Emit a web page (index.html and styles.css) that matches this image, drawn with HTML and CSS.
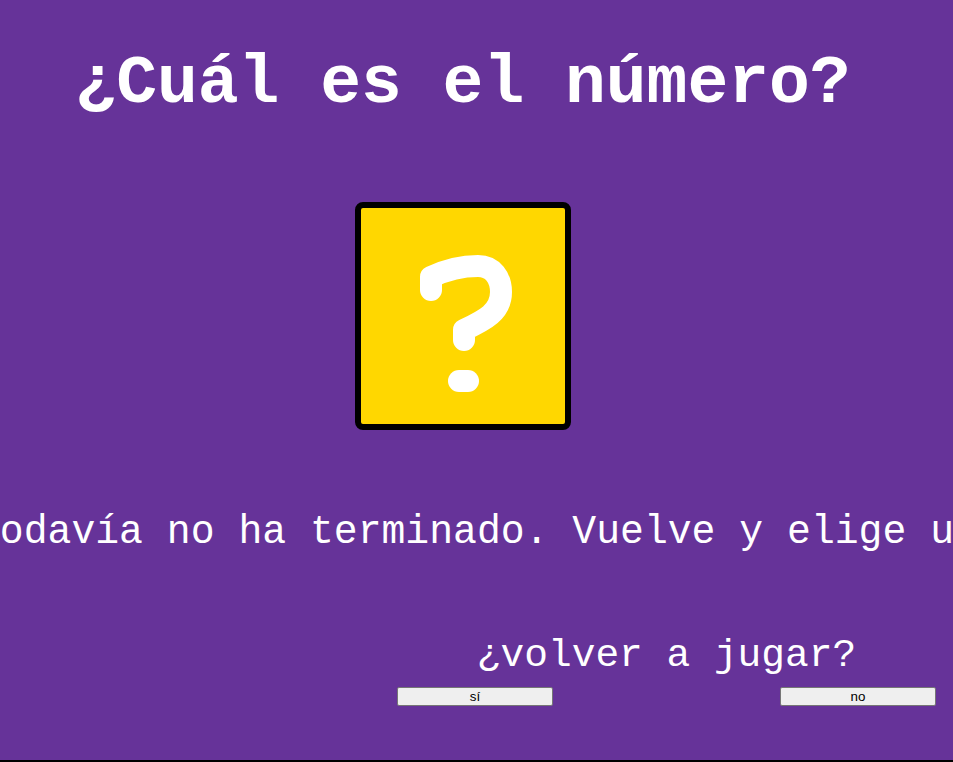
FILE: index.html
```html
<!DOCTYPE html>
<html lang="es">
<head>
<meta charset="utf-8">
<title>¿Cuál es el número?</title>
<link rel="stylesheet" href="styles.css">
</head>
<body>
<main class="page">
  <h1 class="title">¿Cuál es el número?</h1>
  <div class="card-wrap">
    <div class="card">
      <svg class="mark" width="204" height="216" viewBox="0 0 204 216" aria-label="?">
        <path d="M70 82 L70 69 C89 60 107 58 117 58 C132 58 140 70 140 84 C140 104 124 112 103 122 L103 132" fill="none" stroke="#fff" stroke-width="22" stroke-linecap="round" stroke-linejoin="round"/>
        <rect x="87" y="162" width="31" height="22" rx="11" fill="#fff"/>
      </svg>
    </div>
  </div>
  <div class="ticker"><p class="ticker-text">Todavía no ha terminado. Vuelve y elige un número.</p></div>
  <section class="again">
    <p class="again-label">¿volver a jugar?</p>
    <div class="again-buttons">
      <button class="btn" type="button">sí</button>
      <button class="btn" type="button">no</button>
    </div>
  </section>
</main>
</body>
</html>
```
FILE: styles.css
```css
html {
  background: #000;
  height: 100%;
}
body {
  margin: 0;
  height: 760px;
  background: #663399;
  color: #fff;
  font-family: "Courier New", "Nimbus Mono PS", "FreeMono", "Liberation Mono", monospace;
  overflow: hidden;
}
.page {
  width: 926px;
}
.title {
  margin: 45px 0 0;
  font-size: 68px;
  font-weight: bold;
  line-height: 77px;
  text-align: center;
}
.card-wrap {
  display: flex;
  justify-content: center;
  margin-top: 80px;
}
.card {
  box-sizing: border-box;
  width: 216px;
  height: 228px;
  border: 6px solid #000;
  border-radius: 8px;
  background: #ffd700;
  display: flex;
}
.mark {
  display: block;
}
.ticker {
  width: 953px;
  overflow: hidden;
  margin-top: 80px;
}
.ticker-text {
  margin: 0;
  white-space: nowrap;
  font-size: 39.75px;
  line-height: 45px;
  text-indent: -24px;
}
.again {
  width: 539px;
  margin: 78px 0 0 397px;
}
.again-label {
  margin: 0;
  text-align: center;
  font-size: 39.5px;
  line-height: 45px;
}
.again-buttons {
  display: flex;
  justify-content: space-between;
  margin-top: 9px;
}
.btn {
  width: 156px;
  height: 19px;
  padding: 0;
  font-family: "Liberation Sans", Arial, sans-serif;
  font-size: 13.33px;
  color: #000;
  background: #efefef;
  border: 1px solid #767676;
  border-radius: 2px;
}
```
